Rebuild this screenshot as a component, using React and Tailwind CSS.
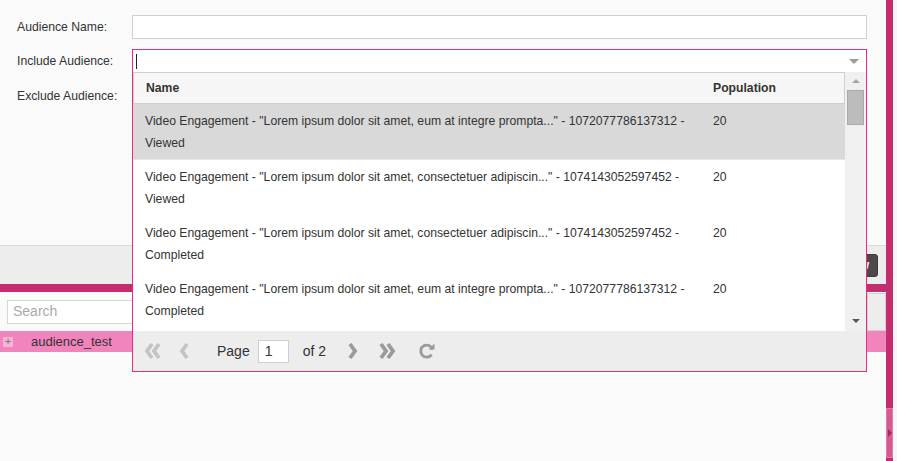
import React from 'react';

const rows = [
  { name: 'Video Engagement - "Lorem ipsum dolor sit amet, eum at integre prompta..." - 1072077786137312 - Viewed', pop: 20, active: true },
  { name: 'Video Engagement - "Lorem ipsum dolor sit amet, consectetuer adipiscin..." - 1074143052597452 - Viewed', pop: 20 },
  { name: 'Video Engagement - "Lorem ipsum dolor sit amet, consectetuer adipiscin..." - 1074143052597452 - Completed', pop: 20 },
  { name: 'Video Engagement - "Lorem ipsum dolor sit amet, eum at integre prompta..." - 1072077786137312 - Completed', pop: 20 },
];

function Chevron({ dir = 'left', double = false, color }) {
  const one = dir === 'left' ? 'M9 2 L4 9 L9 16' : 'M4 2 L9 9 L4 16';
  const two = dir === 'left' ? 'M16 2 L11 9 L16 16' : 'M11 2 L16 9 L11 16';
  return (
    <svg width={double ? 20 : 13} height="18" viewBox={double ? '0 0 20 18' : '0 0 13 18'}>
      <path d={one} fill="none" stroke={color} strokeWidth="3.8" />
      {double && <path d={two} fill="none" stroke={color} strokeWidth="3.8" />}
    </svg>
  );
}

function Dropdown() {
  return (
    <div className="absolute left-[132px] top-[72px] w-[735px] h-[300px] border-x border-b border-[#ef2a7e] bg-white flex flex-col">
      <div className="flex h-[259px]">
        <div className="w-[712px] flex flex-col overflow-hidden">
          <div className="h-[32px] shrink-0 flex items-center border border-[#cfcfcf] bg-[#f6f6f6] font-bold text-[12.2px] text-[#333]">
            <div className="w-[571px] pl-[12px]">Name</div>
            <div className="pl-[8px]">Population</div>
          </div>
          {rows.map((r, i) => (
            <div key={i} className={`flex shrink-0 h-[56px] pt-[6px] text-[12.2px] leading-[22px] text-[#333] border-b border-dotted ${r.active ? 'bg-[#d9d9d9] border-[#f4f4f4]' : 'bg-white border-white'}`}>
              <div className="w-[571px] pl-[12px] pr-[10px]">{r.name}</div>
              <div className="pl-[9px]">{r.pop}</div>
            </div>
          ))}
        </div>
        <div className="w-[21px] bg-[#f0f0f0] flex flex-col items-center pt-[7px]">
          <div className="w-0 h-0 border-x-[4px] border-x-transparent border-b-[4px] border-b-[#a8a8a8]" />
          <div className="mt-[7px] w-[17px] h-[35px] bg-[#bcbcbc] border border-[#a9a9a9]" />
          <div className="mt-auto mb-[8px] w-0 h-0 border-x-[4px] border-x-transparent border-t-[4px] border-t-[#555]" />
        </div>
      </div>
      <div className="flex-1 bg-[#ededed] flex items-center pl-[10px] text-[14px] text-[#333]">
        <Chevron dir="left" double color="#c4c4c4" />
        <span className="ml-[15px]"><Chevron dir="left" color="#c4c4c4" /></span>
        <span className="ml-[26px]">Page</span>
        <div className="ml-[8px] w-[31px] h-[23px] bg-white border border-[#cfcfcf] flex items-center pl-[6px]">1</div>
        <span className="ml-[14px]">of 2</span>
        <span className="ml-[20px]"><Chevron dir="right" color="#9a9a9a" /></span>
        <span className="ml-[18px]"><Chevron dir="right" double color="#9a9a9a" /></span>
        <svg className="ml-[20px]" width="20" height="20" viewBox="0 0 20 20">
          <path d="M15.5 8.5 A6 6 0 1 0 14.6 13.6" fill="none" stroke="#9a9a9a" strokeWidth="2.8" />
          <path d="M11.5 8.5 L17.5 8.5 L17.5 2.5 Z" fill="#9a9a9a" />
        </svg>
      </div>
    </div>
  );
}

export default function App() {
  return (
    <div className="relative w-[897px] h-[461px] overflow-hidden bg-[#fafafa] flex font-['Liberation_Sans',Arial,sans-serif]">
      <div className="w-[886px] flex flex-col">
        <div className="h-[245px] shrink-0 pt-[15px] pl-[17px] text-[12.2px] text-[#333]">
          <div className="flex items-center h-[24px]">
            <div className="w-[115px]">Audience Name:</div>
            <div className="w-[735px] h-[24px] bg-white border border-[#cfcfcf]" />
          </div>
          <div className="flex items-center h-[24px] mt-[10px]">
            <div className="w-[115px]">Include Audience:</div>
            <div className="w-[735px] h-[24px] bg-white border border-[#ef2a7e] flex items-center pl-[3px]">
              <div className="w-px h-[15px] bg-[#222]" />
              <div className="ml-auto mr-[7px] w-0 h-0 border-x-[5px] border-x-transparent border-t-[5px] border-t-[#9a9a9a]" />
            </div>
          </div>
          <div className="flex items-center h-[24px] mt-[11px]">
            <div className="w-[115px]">Exclude Audience:</div>
          </div>
        </div>
        <div className="h-[39px] shrink-0 bg-[#ededed] border-t border-[#d9d9d9] flex items-center justify-end pr-[8px]">
          <div className="h-[23px] px-[8px] bg-[#4a4a4a] rounded-[3px] border border-[#3a3a3a] text-white text-[12px] font-bold flex items-center">New</div>
        </div>
        <div className="h-[8px] shrink-0 bg-[#c62d6e]" />
        <div className="h-[39px] shrink-0 flex items-center pl-[7px]">
          <div className="w-[140px] h-[24px] bg-white border border-[#d6d6d6] flex items-center pl-[5px] text-[14px] text-[#aaa]">Search</div>
          <div className="ml-auto h-[38px] w-[19px] bg-[#ededed] border border-[#d0d0d0]" />
        </div>
        <div className="h-[21px] shrink-0 bg-[#f284bd] flex items-center text-[13px] text-[#333]">
          <div className="ml-[3px] w-[10px] h-[10px] bg-[#f6b3d5] flex items-center justify-center text-[11px] leading-none text-[#777]">+</div>
          <span className="ml-[18px]">audience_test</span>
        </div>
      </div>
      <div className="w-[7px] bg-[#c62d6e] flex flex-col">
        <div className="mt-[408px] h-[50px] bg-[#d45a8f] border border-[#e07aa6] flex items-center justify-center">
          <div className="w-0 h-0 border-y-[4px] border-y-transparent border-l-[4px] border-l-[#b3215f]" />
        </div>
      </div>
      <div className="flex-1 bg-[#f6f6f6]" />
      <Dropdown />
    </div>
  );
}
